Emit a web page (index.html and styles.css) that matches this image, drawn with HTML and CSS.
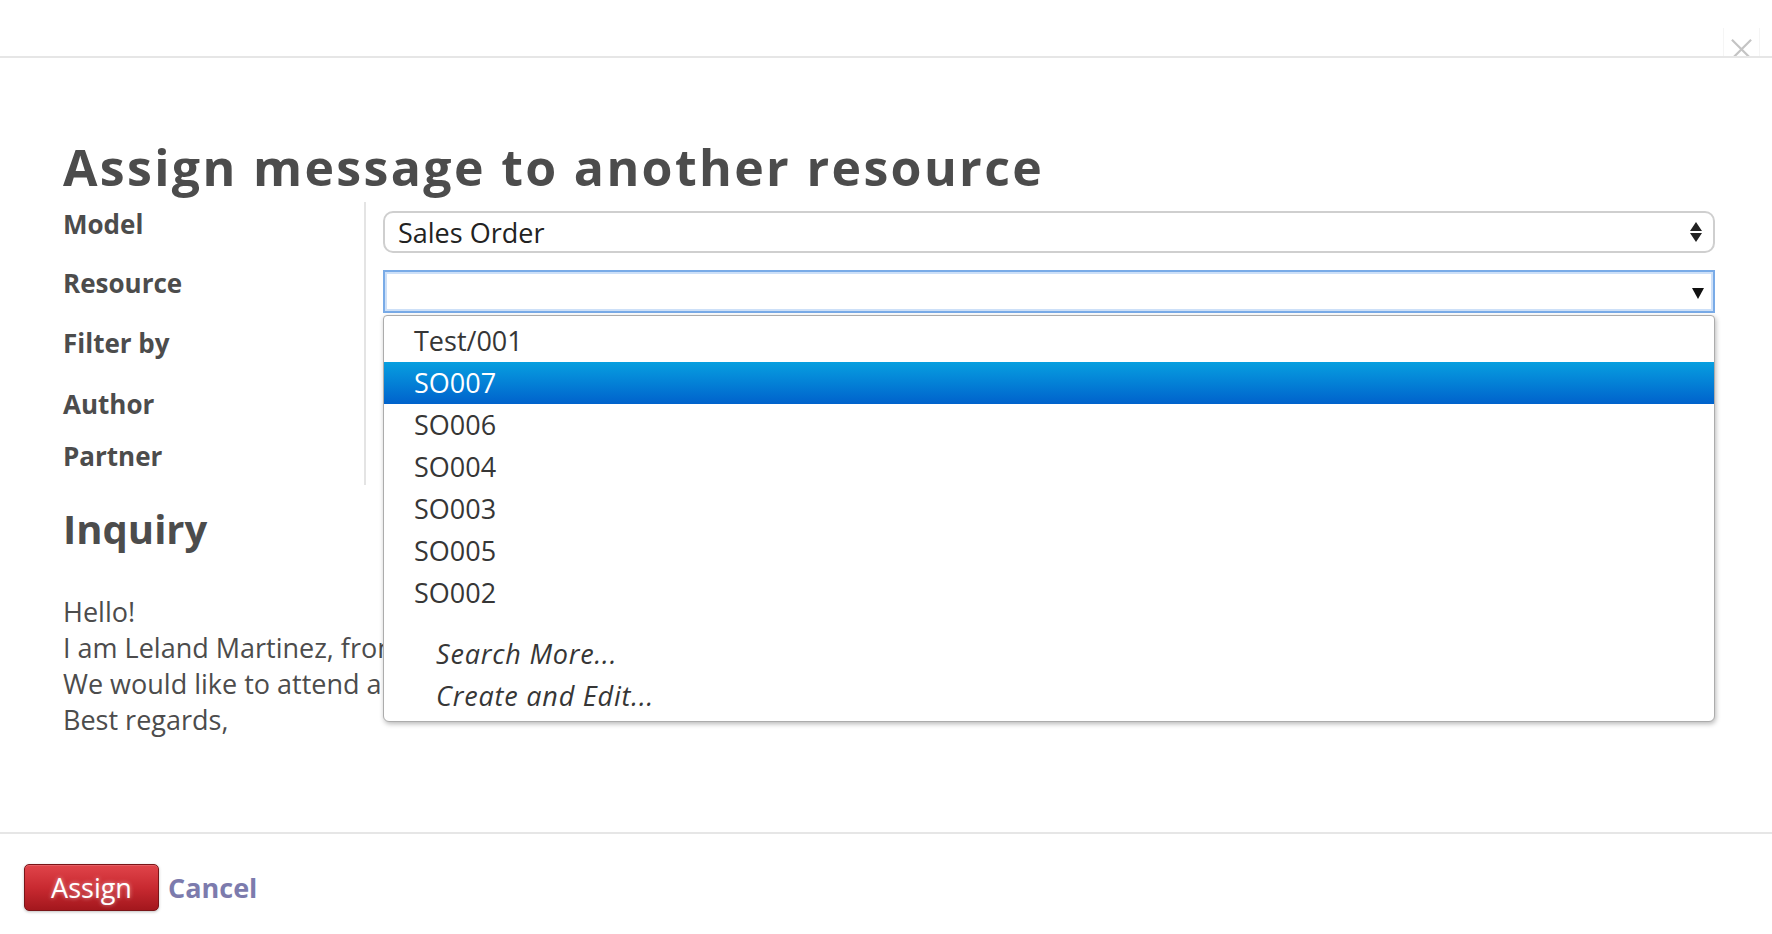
FILE: index.html
```html
<!DOCTYPE html>
<html lang="en">
<head>
<meta charset="utf-8">
<title>Assign message to another resource</title>
<link rel="stylesheet" href="styles.css">
</head>
<body>
<div class="dialog">
  <header class="dlg-header">
    <button class="close" type="button" aria-label="Close">
      <svg width="23" height="18" viewBox="0 0 23 18"><path d="M1 1 L22 22 M22 1 L1 22" stroke="#c4c4c4" stroke-width="2.4" fill="none"/></svg>
    </button>
  </header>
  <main class="dlg-body">
    <h1 class="title">Assign message to another resource</h1>
    <div class="form-grid">
      <div class="lbl first">Model</div>
      <div class="fld first">
        <div class="select">
          <span class="select-value">Sales Order</span>
          <svg class="updown" width="12" height="21" viewBox="0 0 12 21"><path d="M6 0 L12 9 L0 9 Z M0 11 L12 11 L6 20 Z" fill="#222"/></svg>
        </div>
      </div>
      <div class="lbl">Resource</div>
      <div class="fld">
        <div class="m2o">
          <div class="m2o-input">
            <svg class="caret" width="12" height="11" viewBox="0 0 12 11"><path d="M0 0 L12 0 L6 11 Z" fill="#111"/></svg>
          </div>
          <ul class="ac-menu">
            <li class="ac-item">Test/001</li>
            <li class="ac-item active">SO007</li>
            <li class="ac-item">SO006</li>
            <li class="ac-item">SO004</li>
            <li class="ac-item">SO003</li>
            <li class="ac-item">SO005</li>
            <li class="ac-item">SO002</li>
            <li class="ac-item ac-extra ac-gap">Search More...</li>
            <li class="ac-item ac-extra">Create and Edit...</li>
          </ul>
        </div>
      </div>
      <div class="lbl">Filter by</div>
      <div class="fld"></div>
      <div class="lbl">Author</div>
      <div class="fld"></div>
      <div class="lbl">Partner</div>
      <div class="fld"></div>
    </div>
    <h2 class="subject">Inquiry</h2>
    <p class="message">Hello!<br>I am Leland Martinez, from the Delta PC company.<br>We would like to attend a training on your products.<br>Best regards,</p>
  </main>
  <footer class="dlg-footer">
    <button class="btn-assign" type="button">Assign</button>
    <a class="link-cancel" href="#">Cancel</a>
  </footer>
</div>
</body>
</html>
```

FILE: styles.css
```css
* {
  box-sizing: border-box;
}

html, body {
  margin: 0;
  padding: 0;
  background: #ffffff;
}

body {
  font-family: "Open Sans", "Noto Sans", sans-serif;
  color: #4c4c4c;
}

.dialog {
  width: 1772px;
  height: 934px;
  overflow: hidden;
}

/* header */
.dlg-header {
  height: 58px;
  border-bottom: 2px solid #e6e6e6;
  display: flex;
  justify-content: flex-end;
  align-items: flex-end;
  padding-right: 12px;
}

.close {
  width: 37px;
  height: 28px;
  margin: 0;
  padding: 10px 7px 0 7px;
  background: #ffffff;
  border: none;
  border-left: 1px solid #f5f5f5;
  border-right: 1px solid #f5f5f5;
  display: flex;
  align-items: flex-start;
}

.close svg {
  display: block;
}

/* body */
.dlg-body {
  padding: 81px 57px 94px 63px;
}

.title {
  margin: 0 0 7px 0;
  font-size: 50px;
  line-height: 56px;
  font-weight: 700;
  letter-spacing: 2.35px;
  color: #4c4c4c;
  white-space: nowrap;
}

.form-grid {
  display: grid;
  grid-template-columns: 303px 1fr;
  grid-template-rows: 61px 60px 61px 52px 49px;
}

.lbl {
  font-size: 26px;
  line-height: 36px;
  font-weight: 700;
  color: #4c4c4c;
  padding-top: 2px;
  border-right: 2px solid #e4e4e4;
}

.lbl.first {
  padding-top: 4px;
}

.fld {
  padding-left: 17px;
  padding-top: 7px;
}

.fld.first {
  padding-top: 9px;
}

.select {
  height: 42px;
  border: 2px solid #cfcfcf;
  border-radius: 10px;
  background: #ffffff;
  display: flex;
  align-items: center;
  justify-content: space-between;
  padding: 0 11px 0 13px;
}

.select-value {
  font-size: 27px;
  line-height: 38px;
  color: #222222;
  padding-top: 2px;
}

.updown {
  display: block;
  margin-top: 1px;
}

.m2o {
  position: relative;
}

.m2o-input {
  height: 43px;
  border: 2px solid #79abe7;
  box-shadow: inset 0 0 0 2px #cde0f8;
  background: #ffffff;
  display: flex;
  align-items: center;
  justify-content: flex-end;
  padding: 4px 9px 0 0;
}

.caret {
  display: block;
}

.ac-menu {
  position: absolute;
  top: calc(100% + 2px);
  left: 0;
  right: 0;
  z-index: 10;
  margin: 0;
  padding: 4px 0;
  list-style: none;
  background: #ffffff;
  border: 1px solid #acacac;
  border-radius: 4px 4px 6px 6px;
  box-shadow: 1px 2px 5px rgba(0, 0, 0, 0.28);
}

.ac-item {
  height: 42px;
  padding: 1px 0 1px 30px;
  font-size: 27px;
  line-height: 40px;
  color: #363636;
}

.ac-item.active {
  background: linear-gradient(to bottom, #079fe0, #0062cc);
  color: #ffffff;
}

.ac-extra {
  font-style: italic;
  padding-left: 52px;
  letter-spacing: 0.8px;
}

.ac-gap {
  margin-top: 19px;
}

.subject {
  margin: 20px 0 0 0;
  font-size: 40px;
  line-height: 48px;
  font-weight: 700;
  color: #4c4c4c;
}

.message {
  margin: 41px 0 0 0;
  font-size: 27px;
  line-height: 36px;
  color: #4c4c4c;
}

/* footer */
.dlg-footer {
  border-top: 2px solid #e6e6e6;
  padding: 30px 0 0 24px;
  display: flex;
  align-items: baseline;
  gap: 9px;
}

.btn-assign {
  width: 135px;
  height: 47px;
  margin: 0;
  padding: 0;
  border: 1px solid #7a1518;
  border-radius: 5px;
  background: linear-gradient(to bottom, #e0444a 0%, #c92a31 50%, #a3171d 100%);
  box-shadow: 0 1px 3px rgba(0, 0, 0, 0.25), inset 0 1px 0 rgba(255, 255, 255, 0.15);
  font-family: "Open Sans", "Noto Sans", sans-serif;
  font-size: 27px;
  line-height: 45px;
  color: #ffffff;
  text-shadow: 0 0 4px rgba(255, 255, 255, 0.55);
}

.link-cancel {
  font-size: 27px;
  font-weight: 700;
  color: #7c7bad;
  text-decoration: none;
}
```
